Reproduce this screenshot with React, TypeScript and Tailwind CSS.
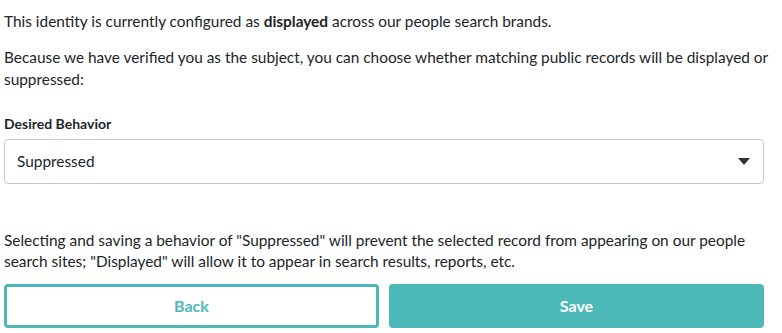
export default function App() {
  return (
    <div
      className="w-[760px] ml-[4px] text-[#212529] bg-white"
      style={{ fontFamily: 'Lato, "Open Sans", sans-serif' }}
    >
      <p className="text-[15.4px] leading-[22px] pt-[10px]">
        This identity is currently configured as <b>displayed</b> across our people search brands.
      </p>
      <p className="text-[15.4px] leading-[22px] mt-[14px] mr-[-8px]">
        Because we have verified you as the subject, you can choose whether matching public records will be displayed or
        suppressed:
      </p>
      <div className="mt-[25px] text-[14px] font-bold leading-[18px]">Desired Behavior</div>
      <div className="mt-[6px] h-[45px] border border-[#c8c8c8] rounded-[4px] flex items-center justify-between pl-[12px] pr-[12px]">
        <span className="text-[15.4px]">Suppressed</span>
        <svg width="12" height="7" viewBox="0 0 12 7" className="mr-[1px]">
          <path d="M0 0 L12 0 L6 7 Z" fill="#333" />
        </svg>
      </div>
      <p className="text-[15.4px] leading-[21px] mt-[46px]">
        Selecting and saving a behavior of "Suppressed" will prevent the selected record from appearing on our people
        search sites; "Displayed" will allow it to appear in search results, reports, etc.
      </p>
      <div className="mt-[12px] flex gap-[10px]">
        <button className="w-[375px] h-[44px] border-[3px] border-[#4cb8b8] rounded-[4px] text-[#4cb8b8] font-bold text-[16px]">
          Back
        </button>
        <button className="w-[375px] h-[44px] bg-[#4cb8b8] rounded-[4px] text-white font-bold text-[16px]">
          Save
        </button>
      </div>
    </div>
  )
}
